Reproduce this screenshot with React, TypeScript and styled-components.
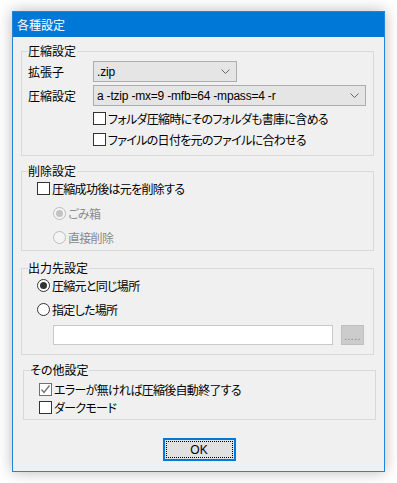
import styled, { createGlobalStyle } from 'styled-components';

const GlobalStyle = createGlobalStyle`
  html, body {
    margin: 0;
    padding: 0;
    background: #ffffff;
  }
  body {
    font-family: 'Noto Sans CJK JP', 'Noto Sans', sans-serif;
    font-size: 12px;
    color: #000;
  }
`;

const jp = `'Noto Sans CJK JP', sans-serif`;
const latin = `'Liberation Sans', 'Noto Sans', sans-serif`;

// 画面
const Page = styled.div`
  padding: 11px 0 0 12px;
  height: 483px;
  box-sizing: border-box;
`;

const Window = styled.div`
  width: 373px;
  height: 461px;
  box-sizing: border-box;
  border: 1px solid #2384d6;
  background: #f0f0f0;
  box-shadow: 0 0 14px rgba(0, 0, 0, 0.28);
  display: flex;
  flex-direction: column;
`;

const TitleBar = styled.div`
  height: 25px;
  background: #0078d7;
  color: #fff;
  display: flex;
  align-items: center;
  padding-left: 4px;
  font-family: ${jp};
  font-size: 12px;
  font-feature-settings: 'palt';
`;

const Client = styled.div`
  flex: 1;
  display: flex;
  flex-direction: column;
  padding: 14px 10px 0 8px;
`;

const Group = styled.div<{ $top?: number; $shift?: number; $padBottom?: number; $padLeft?: number }>`
  border: 1px solid #d9d9d9;
  margin-top: ${(p) => p.$top ?? 0}px;
  margin-left: ${(p) => p.$shift ?? 0}px;
  margin-right: ${(p) => -(p.$shift ?? 0)}px;
  padding: 0 0 ${(p) => p.$padBottom ?? 0}px ${(p) => p.$padLeft ?? 6}px;
  display: flex;
  flex-direction: column;
`;

const Legend = styled.div`
  margin: -8px 0 0 0;
  height: 14px;
  line-height: 14px;
  padding: 0 1px 0 0;
  width: fit-content;
  background: #f0f0f0;
  font-family: ${jp};
  font-feature-settings: 'palt';
`;

const Body = styled.div<{ $top?: number; $indent?: number }>`
  margin-top: ${(p) => p.$top ?? 0}px;
  padding-left: ${(p) => p.$indent ?? 0}px;
  display: flex;
  flex-direction: column;
`;

const FieldGrid = styled.div`
  display: grid;
  grid-template-columns: 65px auto;
  row-gap: 3px;
  align-items: center;
  margin-top: 3px;
`;

const FieldLabel = styled.span`
  font-family: ${jp};
  font-feature-settings: 'palt';
  line-height: 21px;
`;

const Combo = styled.div<{ $width: number }>`
  width: ${(p) => p.$width}px;
  height: 21px;
  box-sizing: border-box;
  border: 1px solid #adadad;
  background: #e5e5e5;
  display: flex;
  align-items: center;
  justify-content: space-between;
  padding: 0 6px 0 3px;
  font-family: ${latin};
  font-size: 12px;
  letter-spacing: -0.2px;
  color: #000;
`;

const Row = styled.label<{ $height?: number; $top?: number; $indent?: number; $disabled?: boolean }>`
  display: flex;
  align-items: center;
  gap: 2px;
  height: ${(p) => p.$height ?? 21}px;
  margin-top: ${(p) => p.$top ?? 0}px;
  padding-left: ${(p) => p.$indent ?? 0}px;
  color: ${(p) => (p.$disabled ? '#8a8a8a' : '#000')};
  font-family: ${jp};
  font-feature-settings: 'palt';
  letter-spacing: -0.7px;
  white-space: nowrap;
`;

const Box = styled.span<{ $soft?: boolean }>`
  width: 13px;
  height: 13px;
  box-sizing: border-box;
  border: 1px solid ${(p) => (p.$soft ? '#707070' : '#333')};
  background: #fff;
  display: inline-flex;
  align-items: center;
  justify-content: center;
  flex-shrink: 0;
`;

const Radio = styled.span<{ $on?: boolean; $disabled?: boolean }>`
  width: 13px;
  height: 13px;
  box-sizing: border-box;
  border-radius: 50%;
  border: 1px solid ${(p) => (p.$disabled ? '#bcbcbc' : '#333')};
  background: ${(p) => (p.$disabled ? '#f4f4f4' : '#fff')};
  display: inline-flex;
  align-items: center;
  justify-content: center;
  flex-shrink: 0;
  &::after {
    content: '';
    display: ${(p) => (p.$on ? 'block' : 'none')};
    width: 7px;
    height: 7px;
    border-radius: 50%;
    background: ${(p) => (p.$disabled ? '#c2c2c2' : '#333')};
  }
`;

const PathRow = styled.div`
  display: flex;
  gap: 8px;
  margin-top: 5px;
  padding-left: 25px;
`;

const PathInput = styled.div`
  width: 280px;
  height: 20px;
  box-sizing: border-box;
  border: 1px solid #c8c8c8;
  background: #fff;
`;

const BrowseButton = styled.div`
  width: 23px;
  height: 20px;
  box-sizing: border-box;
  border: 1px solid #bfbfbf;
  background: #cccccc;
  color: #838383;
  font-family: ${latin};
  font-size: 10px;
  display: flex;
  align-items: flex-end;
  justify-content: center;
  line-height: 14px;
  letter-spacing: 0.5px;
`;

const Footer = styled.div`
  display: flex;
  justify-content: center;
  margin-top: 18px;
  padding-left: 3px;
`;

const OkButton = styled.button`
  width: 73px;
  height: 23px;
  box-sizing: border-box;
  border: 2px solid #0078d7;
  background: #e1e1e1;
  padding: 1px;
  font-family: ${latin};
  font-size: 12px;
  color: #000;
  span {
    display: flex;
    width: 100%;
    height: 100%;
    box-sizing: border-box;
    border: 1px dotted #000;
    align-items: center;
    justify-content: center;
  }
`;

const Chevron = () => (
  <svg width="9" height="5" viewBox="0 0 9 5">
    <polyline points="0.5,0.5 4.5,4.5 8.5,0.5" fill="none" stroke="#666" strokeWidth="1" />
  </svg>
);

const Check = () => (
  <svg width="11" height="11" viewBox="0 0 11 11">
    <polyline points="1.5,5.5 4,8.5 9.5,1.5" fill="none" stroke="#707070" strokeWidth="1.3" />
  </svg>
);

export default function App() {
  return (
    <>
      <GlobalStyle />
      <Page>
        <Window>
          <TitleBar>各種設定</TitleBar>
          <Client>
            {/* 圧縮設定 */}
            <Group $padBottom={5}>
              <Legend>圧縮設定</Legend>
              <FieldGrid>
                <FieldLabel>拡張子</FieldLabel>
                <Combo $width={144}>
                  .zip
                  <Chevron />
                </Combo>
                <FieldLabel>圧縮設定</FieldLabel>
                <Combo $width={273}>
                  a -tzip -mx=9 -mfb=64 -mpass=4 -r
                  <Chevron />
                </Combo>
              </FieldGrid>
              <Body $top={2} $indent={65}>
                <Row>
                  <Box />
                  フォルダ圧縮時にそのフォルダも書庫に含める
                </Row>
                <Row>
                  <Box />
                  ファイルの日付を元のファイルに合わせる
                </Row>
              </Body>
            </Group>

            {/* 削除設定 */}
            <Group $top={15} $padBottom={1}>
              <Legend>削除設定</Legend>
              <Body $indent={9}>
                <Row>
                  <Box />
                  圧縮成功後は元を削除する
                </Row>
                <Row $height={24} $top={2} $indent={16} $disabled>
                  <Radio $on $disabled />
                  ごみ箱
                </Row>
                <Row $height={24} $indent={16} $disabled>
                  <Radio $disabled />
                  直接削除
                </Row>
              </Body>
            </Group>

            {/* 出力先設定 */}
            <Group $top={17} $padBottom={9}>
              <Legend>出力先設定</Legend>
              <Body $indent={9}>
                <Row>
                  <Radio $on />
                  圧縮元と同じ場所
                </Row>
                <Row $top={3}>
                  <Radio />
                  指定した場所
                </Row>
              </Body>
              <PathRow>
                <PathInput />
                <BrowseButton>.....</BrowseButton>
              </PathRow>
            </Group>

            {/* その他設定 */}
            <Group $top={15} $shift={2} $padBottom={3}>
              <Legend>その他設定</Legend>
              <Body $top={3} $indent={9}>
                <Row $height={18}>
                  <Box $soft>
                    <Check />
                  </Box>
                  エラーが無ければ圧縮後自動終了する
                </Row>
                <Row $height={18}>
                  <Box />
                  ダークモード
                </Row>
              </Body>
            </Group>

            <Footer>
              <OkButton>
                <span>OK</span>
              </OkButton>
            </Footer>
          </Client>
        </Window>
      </Page>
    </>
  );
}
